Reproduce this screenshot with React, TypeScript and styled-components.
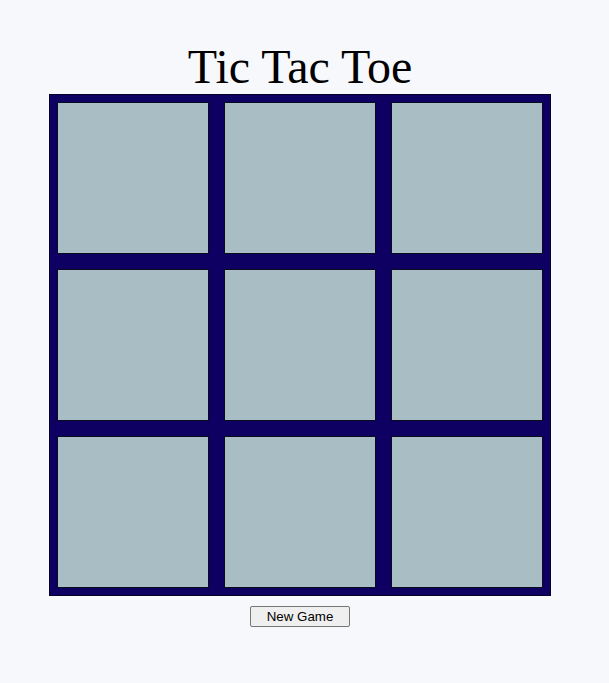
import React from "react";
import styled, { createGlobalStyle } from "styled-components";

const Global = createGlobalStyle`
  html, body { margin: 0; padding: 0; background: #f7f8fc; }
`;

const Page = styled.div`
  width: 600px;
  padding-top: 40px;
  display: flex;
  flex-direction: column;
  align-items: center;
`;

const Title = styled.h1`
  margin: 0;
  font-family: "Liberation Serif", "Times New Roman", serif;
  font-weight: normal;
  font-size: 48px;
  line-height: 53px;
  color: #000;
`;

const Board = styled.div`
  margin-top: 1px;
  box-sizing: border-box;
  width: 502px;
  height: 502px;
  padding: 7px;
  background: #0e0062;
  border: 1px solid #05002a;
  display: grid;
  grid-template-columns: repeat(3, 152px);
  grid-template-rows: repeat(3, 152px);
  gap: 15px;
`;

const Cell = styled.button`
  box-sizing: border-box;
  width: 152px;
  height: 152px;
  margin: 0;
  padding: 0;
  background: #a9bec4;
  border: 1px solid #0a0a1e;
  cursor: pointer;
`;

const NewGame = styled.button`
  margin-top: 10px;
  box-sizing: border-box;
  width: 100px;
  height: 21px;
  padding: 0 6px;
  font-family: "Liberation Sans", Arial, sans-serif;
  font-size: 13.33px;
  color: #000;
  background: #efefef;
  border: 1px solid #767676;
  border-radius: 2px;
`;

export default function App() {
  return (
    <>
      <Global />
      <Page>
        <Title>Tic Tac Toe</Title>
        <Board>
          {Array.from({ length: 9 }).map((_, i) => (
            <Cell key={i} aria-label={`cell ${i + 1}`} />
          ))}
        </Board>
        <NewGame>New Game</NewGame>
      </Page>
    </>
  );
}
